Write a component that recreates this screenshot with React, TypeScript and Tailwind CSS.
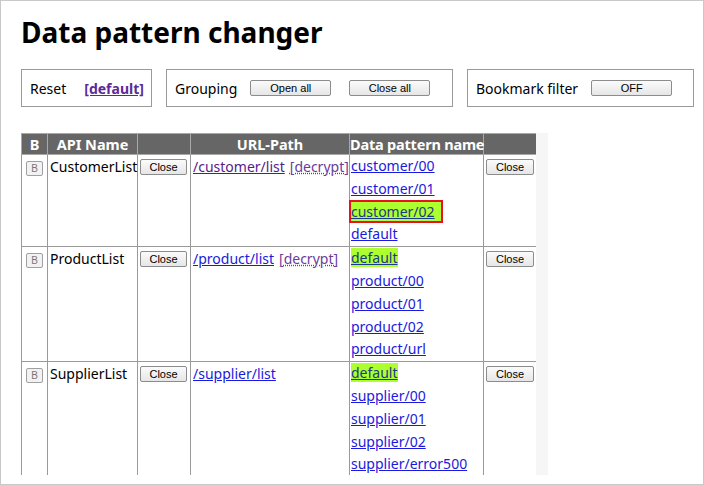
const font = { fontFamily: '"Noto Sans", "Liberation Sans", sans-serif' };

type Pattern = { name: string; active?: boolean; marked?: boolean };
type Api = {
  name: string;
  path: string;
  pathVisited?: boolean;
  decrypt?: boolean;
  patterns: Pattern[];
};

const apis: Api[] = [
  {
    name: 'CustomerList',
    path: '/customer/list',
    pathVisited: true,
    decrypt: true,
    patterns: [
      { name: 'customer/00' },
      { name: 'customer/01' },
      { name: 'customer/02', active: true, marked: true },
      { name: 'default' },
    ],
  },
  {
    name: 'ProductList',
    path: '/product/list',
    decrypt: true,
    patterns: [
      { name: 'default', active: true },
      { name: 'product/00' },
      { name: 'product/01' },
      { name: 'product/02' },
      { name: 'product/url' },
    ],
  },
  {
    name: 'SupplierList',
    path: '/supplier/list',
    patterns: [
      { name: 'default', active: true },
      { name: 'supplier/00' },
      { name: 'supplier/01' },
      { name: 'supplier/02' },
      { name: 'supplier/error500' },
    ],
  },
];

const SmallButton = ({ label, className = '' }: { label: string; className?: string }) => (
  <button
    className={`h-[16px] rounded-[2px] border border-[#8c8c8c] bg-gradient-to-b from-[#fbfbfb] to-[#e6e6e6] text-[11px] leading-[14px] text-black ${className}`}
    style={{ fontFamily: '"Liberation Sans", Arial, sans-serif' }}
  >
    {label}
  </button>
);

const App = () => {
  return (
    <div
      className="w-[704px] h-[485px] border border-[#c9c9c9] bg-white overflow-hidden text-black"
      style={font}
    >
      <div className="pl-[20px] pt-[10px]">
        <h1 className="text-[28px] leading-[42px] font-bold">Data pattern changer</h1>

        <div className="mt-[16px] flex gap-[14px]">
          <div className="w-[131px] h-[38px] border border-[#9a9a9a] flex items-center pl-[8px] text-[14px]">
            <span>Reset</span>
            <a href="#" className="ml-[18px] font-bold text-[#5a2a9a] underline">[default]</a>
          </div>
          <div className="w-[287px] h-[38px] border border-[#9a9a9a] flex items-center pl-[8px] text-[14px]">
            <span>Grouping</span>
            <SmallButton label="Open all" className="ml-[13px] w-[81px]" />
            <SmallButton label="Close all" className="ml-[18px] w-[81px]" />
          </div>
          <div className="w-[227px] h-[38px] border border-[#9a9a9a] flex items-center pl-[8px] text-[14px]">
            <span>Bookmark filter</span>
            <SmallButton label="OFF" className="ml-[13px] w-[81px]" />
          </div>
        </div>

        <div className="mt-[26px] flex h-[342px]">
          <div className="w-[515px] overflow-hidden">
            <table className="border-collapse text-[14px] table-fixed w-[515px]">
              <colgroup>
                <col className="w-[26px]" />
                <col className="w-[90px]" />
                <col className="w-[53px]" />
                <col className="w-[159px]" />
                <col className="w-[134px]" />
                <col className="w-[53px]" />
              </colgroup>
              <thead>
                <tr className="bg-[#666666] text-white font-semibold text-[14.5px] h-[21px] leading-[19px]">
                  <th className="border border-[#a8a8a8] p-0">B</th>
                  <th className="border border-[#a8a8a8] p-0">API Name</th>
                  <th className="border border-[#a8a8a8] p-0"></th>
                  <th className="border border-[#a8a8a8] p-0">URL-Path</th>
                  <th className="border border-[#a8a8a8] p-0 whitespace-nowrap tracking-[-0.2px]">Data pattern name</th>
                  <th className="border border-[#a8a8a8] p-0"></th>
                </tr>
              </thead>
              <tbody>
                {apis.map((api) => (
                  <tr key={api.name} className="align-top">
                    <td className="border border-[#9a9a9a] py-0 pt-[6px] pl-[4px]">
                      <span
                        className="flex w-[17px] h-[15px] items-center justify-center rounded-[2px] border border-[#a0a0a0] bg-[#f2f2f2] text-[10px] text-[#777]"
                        style={{ fontFamily: '"Liberation Sans", Arial, sans-serif' }}
                      >
                        B
                      </span>
                    </td>
                    <td className="border border-[#9a9a9a] py-0 pl-[2px] leading-[23px] whitespace-nowrap">{api.name}</td>
                    <td className="border border-[#9a9a9a] py-0 pt-[4px] pl-[2px] leading-[0]">
                      <SmallButton label="Close" className="block w-[47px]" />
                    </td>
                    <td className="border border-[#9a9a9a] py-0 pl-[2px] leading-[23px] whitespace-nowrap">
                      <a href="#" className={`underline ${api.pathVisited ? 'text-[#551a8b]' : 'text-[#1a1add]'}`}>
                        {api.path}
                      </a>
                      {api.decrypt && (
                        <a href="#" className="ml-[5px] underline decoration-dotted text-[#6a3d9a]">[decrypt]</a>
                      )}
                    </td>
                    <td className="border border-[#9a9a9a] py-0 pl-[1px] leading-[22.8px]">
                      {api.patterns.map((p) => (
                        <div key={p.name} className="h-[22.8px]">
                          <a
                            href="#"
                            className={`underline text-[#1a1add] ${p.active ? 'bg-[#adff2f] text-[#1a3a8a]' : ''} ${
                              p.marked ? 'outline-2 outline-[#e8121a] pr-[6px]' : ''
                            }`}
                          >
                            {p.name}
                          </a>
                        </div>
                      ))}
                    </td>
                    <td className="border border-[#9a9a9a] py-0 pt-[4px] pl-[2px] leading-[0]">
                      <SmallButton label="Close" className="block w-[48px]" />
                    </td>
                  </tr>
                ))}
              </tbody>
            </table>
          </div>
          <div className="w-[12px] bg-[#f6f6f6]" />
        </div>
      </div>
    </div>
  );
};

export default App;
